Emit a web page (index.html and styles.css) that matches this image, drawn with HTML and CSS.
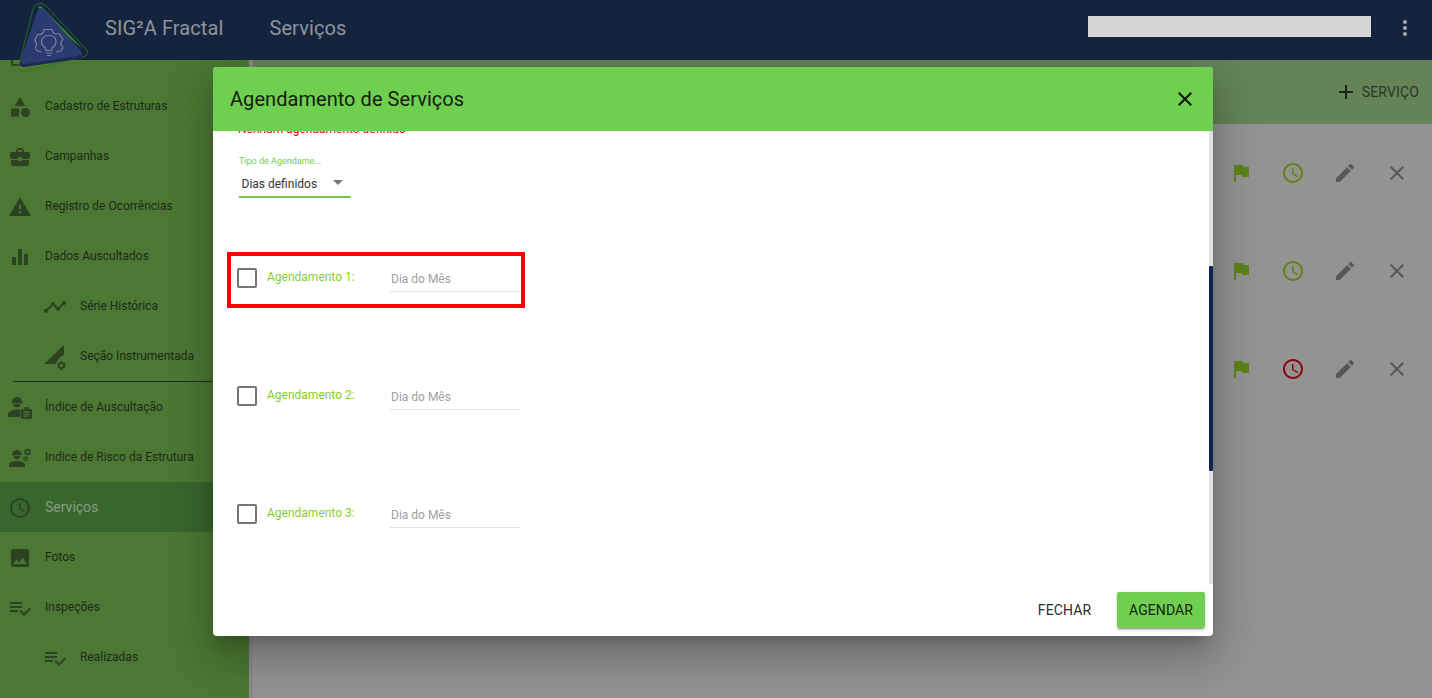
FILE: index.html
```html
<!DOCTYPE html>
<html lang="pt-BR">
<head>
<meta charset="utf-8">
<title>SIG²A Fractal - Serviços</title>
<link rel="stylesheet" href="styles.css">
</head>
<body>
<div class="app">
  <header class="topbar">
    <svg class="logo" viewBox="0 0 96 76" aria-hidden="true">
      <path class="logo-ring" d="M38 4 Q42 2 46 6 L86 49 Q90 55 83 57 L26 71 Q18 73 19 65 L33 9 Q34 5 38 4Z"/>
      <path class="logo-green" d="M38 7 Q41 5 44 9 L84 50 L60 30Z"/>
      <path class="logo-shadow" d="M41 11 L83 55 Q83 58 78 59 L24 67 Q19 67 20 62Z"/>
      <path class="logo-body" d="M38 10 Q41 6 45 10 L80 50 Q85 55 78 56 L26 64 Q19 65 21 59 L37 12Z"/>
      <path class="logo-line" d="M41 52 Q33 50 36.500 45 L36 42 Q34 40 36 37.500 L38 34.500 L41 34.500 L43.500 32.500 L44 29.500 L52 29.500 L53 32.500 L55.500 34 L59 33.500 L63 39.500 L61 42 L61 45 L63 47.500 L61 51 L56 52"/>
      <path class="logo-line" d="M45.500 48 Q41 45 41.500 41 Q42.500 35.500 49 35.500 Q55.500 35.500 56 41 Q56.500 45 52 48 L52 50.500 L46 50.500Z"/>
      <path class="logo-line" d="M46 53 H52 M47 55.500 H51"/>
    </svg>
    <span class="brand">SIG²A Fractal</span>
    <span class="page-title">Serviços</span>
    <div class="search-bar"></div>
    <svg class="icon more" viewBox="0 0 24 24"><use href="#i-more"/></svg>
  </header>

  <div class="workspace">
    <nav class="sidebar">
      <div class="nav-row nav-hidden"><svg class="icon" viewBox="0 0 24 24"><rect x="4" y="4" width="16" height="16" rx="1" class="outline"/></svg></div>
      <div class="nav-row"><svg class="icon" viewBox="0 0 24 24"><path d="M12 2l-5.500 9h11z"/><circle cx="17.500" cy="17.500" r="4.500"/><path d="M3 13.500h8v8H3z"/></svg><span>Cadastro de Estruturas</span></div>
      <div class="nav-row"><svg class="icon" viewBox="0 0 24 24"><path d="M10 16v-1H3.010L3 19c0 1.110.890 2 2 2h14c1.110 0 2-.890 2-2v-4h-7v1h-4zm10-9h-4.010V5l-2-2h-4l-2 2v2H4c-1.100 0-2 .900-2 2v3c0 1.110.890 2 2 2h6v-2h4v2h6c1.100 0 2-.900 2-2V9c0-1.100-.900-2-2-2zm-6 0h-4V5h4v2z"/></svg><span>Campanhas</span></div>
      <div class="nav-row"><svg class="icon" viewBox="0 0 24 24"><path d="M1 21h22L12 2 1 21zm12-3h-2v-2h2v2zm0-4h-2v-4h2v4z"/></svg><span>Registro de Ocorrências</span></div>
      <div class="nav-row"><svg class="icon" viewBox="0 0 24 24"><path d="M10 20h4V4h-4v16zm-6 0h4v-8H4v8zM16 9v11h4V9h-4z"/></svg><span>Dados Auscultados</span></div>
      <div class="nav-row nav-sub"><svg class="icon" viewBox="0 0 24 24"><path d="M23 8c0 1.100-.900 2-2 2-.180 0-.350-.020-.510-.070l-3.560 3.550c.050.160.070.340.070.520 0 1.100-.900 2-2 2s-2-.900-2-2c0-.180.020-.360.070-.520l-2.550-2.550c-.160.050-.340.070-.520.070s-.360-.020-.520-.070l-4.550 4.560c.050.160.070.330.070.510 0 1.100-.900 2-2 2s-2-.900-2-2 .900-2 2-2c.180 0 .350.020.510.070l4.560-4.550C8.020 9.360 8 9.180 8 9c0-1.100.900-2 2-2s2 .900 2 2c0 .180-.020.360-.070.520l2.550 2.550c.160-.050.340-.070.520-.070s.360.020.520.070l3.550-3.560C19.020 8.350 19 8.180 19 8c0-1.100.900-2 2-2s2 .900 2 2z"/></svg><span>Série Histórica</span></div>
      <div class="nav-row nav-sub"><svg class="icon" viewBox="0 0 24 24"><path d="M1 19 L21 0 V10 Q15 12 13 19Z"/><use href="#i-gear" width="11" height="11" x="13" y="15"/></svg><span>Seção Instrumentada</span></div>
      <div class="nav-divider"></div>
      <div class="nav-row"><svg class="icon" viewBox="0 0 24 24"><path d="M9 1c-3 0-5 2.200-5 4.800H3.700v1.400h10.600V5.800H14C14 3.200 12 1 9 1zM5.300 8h7.400c-.200 2.300-1.700 3.600-3.700 3.600S5.500 10.300 5.300 8zM9 13.500c-3.600 0-9 1.500-9 4.500v3h12.500v-7.200c-1.200-.200-2.400-.300-3.500-.300z"/><path fill-rule="evenodd" d="M14.500 13h2v-2h4v2h2c.800 0 1.500.700 1.500 1.500v7c0 .800-.700 1.500-1.500 1.500h-8c-.800 0-1.500-.700-1.500-1.500v-7c0-.800.700-1.500 1.500-1.500zm1 2.500v1.200h6v-1.200zm0 2.500v1.200h6V18zm0 2.300v1h4v-1z"/></svg><span>Índice de Auscultação</span></div>
      <div class="nav-row"><svg class="icon" viewBox="0 0 24 24"><path d="M9 4c-2.800 0-4.500 1.900-4.500 4H4v1.300h10V8h-.500C13.500 5.900 11.800 4 9 4zM5.700 10h6.600c-.200 2-1.600 3.400-3.300 3.400S5.900 12 5.700 10zM9 15c-3.800 0-8 1.500-8 4v2h16v-2c0-2.500-4.200-4-8-4z"/><use href="#i-gear" width="9" height="9" x="15" y="1.500"/><use href="#i-gear" width="6.500" height="6.500" x="14.300" y="9.500"/></svg><span>Indice de Risco da Estrutura</span></div>
      <div class="nav-row nav-active"><svg class="icon" viewBox="0 0 24 24"><use href="#i-clock"/></svg><span>Serviços</span></div>
      <div class="nav-row"><svg class="icon" viewBox="0 0 24 24"><path d="M21 19V5c0-1.100-.900-2-2-2H5c-1.100 0-2 .900-2 2v14c0 1.100.900 2 2 2h14c1.100 0 2-.900 2-2zM8.500 13.500l2.500 3.010L14.500 12l4.500 6H5l3.500-4.500z"/></svg><span>Fotos</span></div>
      <div class="nav-row"><svg class="icon" viewBox="0 0 24 24"><use href="#i-check-list"/></svg><span>Inspeções</span></div>
      <div class="nav-row nav-sub"><svg class="icon" viewBox="0 0 24 24"><use href="#i-check-list"/></svg><span>Realizadas</span></div>
    </nav>

    <main class="main">
      <div class="toolbar">
        <button class="add-btn" type="button"><svg class="icon" viewBox="0 0 24 24"><path d="M19 13h-6v6h-2v-6H5v-2h6V5h2v6h6v2z"/></svg><span>SERVIÇO</span></button>
      </div>
      <div class="service-list">
        <div class="service-row">
          <svg class="icon tone-green" viewBox="0 0 24 24"><use href="#i-flag"/></svg>
          <svg class="icon tone-green" viewBox="0 0 24 24"><use href="#i-clock"/></svg>
          <svg class="icon tone-gray" viewBox="0 0 24 24"><use href="#i-edit"/></svg>
          <svg class="icon tone-gray" viewBox="0 0 24 24"><use href="#i-close"/></svg>
        </div>
        <div class="service-row">
          <svg class="icon tone-green" viewBox="0 0 24 24"><use href="#i-flag"/></svg>
          <svg class="icon tone-green" viewBox="0 0 24 24"><use href="#i-clock"/></svg>
          <svg class="icon tone-gray" viewBox="0 0 24 24"><use href="#i-edit"/></svg>
          <svg class="icon tone-gray" viewBox="0 0 24 24"><use href="#i-close"/></svg>
        </div>
        <div class="service-row">
          <svg class="icon tone-green" viewBox="0 0 24 24"><use href="#i-flag"/></svg>
          <svg class="icon tone-red" viewBox="0 0 24 24"><use href="#i-clock"/></svg>
          <svg class="icon tone-gray" viewBox="0 0 24 24"><use href="#i-edit"/></svg>
          <svg class="icon tone-gray" viewBox="0 0 24 24"><use href="#i-close"/></svg>
        </div>
      </div>
    </main>
  </div>

  <section class="dialog" role="dialog" aria-label="Agendamento de Serviços">
    <header class="dialog-head">
      <h2 class="dialog-title">Agendamento de Serviços</h2>
      <svg class="icon dialog-close" viewBox="0 0 24 24"><use href="#i-close"/></svg>
    </header>
    <div class="dialog-scroll">
      <div class="dialog-body">
        <p class="error-msg">Nenhum agendamento definido</p>
        <div class="select-field">
          <div class="select-label">Tipo de Agendame...</div>
          <div class="select-value"><span>Dias definidos</span><i class="select-arrow"></i></div>
        </div>
        <div class="schedule-list">
          <div class="schedule-row">
            <div class="checkbox"></div>
            <div class="schedule-label">Agendamento 1:</div>
            <div class="day-input">Dia do Mês</div>
            <div class="highlight-box"></div>
          </div>
          <div class="schedule-row">
            <div class="checkbox"></div>
            <div class="schedule-label">Agendamento 2:</div>
            <div class="day-input">Dia do Mês</div>
          </div>
          <div class="schedule-row">
            <div class="checkbox"></div>
            <div class="schedule-label">Agendamento 3:</div>
            <div class="day-input">Dia do Mês</div>
          </div>
        </div>
      </div>
      <div class="scroll-track"><div class="scroll-thumb"></div></div>
    </div>
    <footer class="dialog-actions">
      <button class="btn-text" type="button">FECHAR</button>
      <button class="btn-primary" type="button">AGENDAR</button>
    </footer>
  </section>
</div>

<svg class="sprite" aria-hidden="true">
  <symbol id="i-more" viewBox="0 0 24 24"><path d="M12 8c1.100 0 2-.900 2-2s-.900-2-2-2-2 .900-2 2 .900 2 2 2zm0 2c-1.100 0-2 .900-2 2s.900 2 2 2 2-.900 2-2-.900-2-2-2zm0 6c-1.100 0-2 .900-2 2s.900 2 2 2 2-.900 2-2-.900-2-2-2z"/></symbol>
  <symbol id="i-clock" viewBox="0 0 24 24"><path d="M11.990 2C6.470 2 2 6.480 2 12s4.470 10 9.990 10C17.520 22 22 17.520 22 12S17.520 2 11.990 2zM12 20c-4.420 0-8-3.580-8-8s3.580-8 8-8 8 3.580 8 8-3.580 8-8 8z"/><path d="M12.500 7H11v6l5.250 3.150.750-1.230-4.500-2.670z"/></symbol>
  <symbol id="i-flag" viewBox="0 0 24 24"><path d="M14.400 6L14 4H5v17h2v-7h5.600l.400 2h7V6z"/></symbol>
  <symbol id="i-edit" viewBox="0 0 24 24"><path d="M3 17.250V21h3.750L17.810 9.940l-3.750-3.750L3 17.250zM20.710 7.040c.390-.390.390-1.020 0-1.410l-2.340-2.340c-.390-.390-1.020-.390-1.410 0l-1.830 1.830 3.750 3.750 1.830-1.830z"/></symbol>
  <symbol id="i-close" viewBox="0 0 24 24"><path d="M19 6.410L17.590 5 12 10.590 6.410 5 5 6.410 10.590 12 5 17.590 6.410 19 12 13.410 17.590 19 19 17.590 13.410 12z"/></symbol>
  <symbol id="i-check-list" viewBox="0 0 24 24"><path d="M14 10H2v2h12v-2zm0-4H2v2h12V6zM2 16h8v-2H2v2zm19.500-4.500L23 13l-6.990 7-4.510-4.500L13 14l3.010 3 5.490-5.500z"/></symbol>
  <symbol id="i-gear" viewBox="0 0 24 24"><path fill-rule="evenodd" d="M19.140 12.940c.040-.300.060-.610.060-.940 0-.320-.020-.640-.070-.940l2.030-1.580c.180-.140.230-.410.120-.610l-1.920-3.320c-.120-.220-.370-.290-.590-.220l-2.390.960c-.500-.380-1.030-.700-1.620-.940l-.360-2.540c-.040-.240-.240-.410-.480-.410h-3.840c-.240 0-.430.170-.470.410l-.360 2.540c-.590.240-1.130.570-1.620.940l-2.390-.960c-.220-.080-.470 0-.590.220L2.740 8.870c-.120.210-.080.470.120.610l2.030 1.580c-.050.300-.070.620-.070.940s.020.640.07.940l-2.030 1.580c-.180.140-.230.410-.12.610l1.920 3.320c.120.220.37.290.59.220l2.390-.960c.500.380 1.030.700 1.620.940l.360 2.540c.050.240.240.410.48.410h3.840c.240 0 .440-.170.470-.410l.360-2.540c.590-.240 1.130-.560 1.620-.940l2.390.960c.220.080.470 0 .590-.220l1.920-3.320c.120-.220.070-.470-.12-.61l-2.010-1.580zM12 15.600c-1.980 0-3.600-1.620-3.600-3.600s1.620-3.600 3.600-3.600 3.600 1.620 3.600 3.600-1.620 3.600-3.600 3.600z"/></symbol>
</svg>
</body>
</html>
```

FILE: styles.css
```css
* { box-sizing: border-box; }

html, body {
  margin: 0;
  height: 100%;
  overflow: hidden;
  font-family: Roboto, "Liberation Sans", sans-serif;
}

.sprite { display: none; }

.app {
  position: relative;
  display: flex;
  flex-direction: column;
  height: 698px;
  overflow: hidden;
  background: #939393;
}

.icon {
  display: block;
  flex: none;
  width: 24px;
  height: 24px;
  fill: currentColor;
  overflow: visible;
}

/* Top bar */
.topbar {
  position: relative;
  z-index: 3;
  flex: none;
  display: flex;
  align-items: center;
  height: 60px;
  padding: 0 15px 4px 105px;
  background: #15243e;
  color: #8f949c;
  font-size: 20px;
  line-height: 24px;
  letter-spacing: .1px;
}

.logo {
  position: absolute;
  left: 0;
  top: 0;
  width: 96px;
  height: 76px;
}

.logo-ring { fill: none; stroke: #2f7a22; stroke-width: .8; }
.logo-green { fill: #3d8c22; }
.logo-shadow { fill: #1b2a50; }
.logo-body { fill: #2b3a70; }
.logo-line { fill: none; stroke: #7d849b; stroke-width: 1.200; stroke-linejoin: round; }

.brand { margin-right: 46px; }

.search-bar {
  width: 283px;
  height: 21px;
  margin: 0 22px 3px auto;
  background: #d6d6d6;
}

.more { color: #a6a8ad; }

/* Layout under the top bar */
.workspace {
  flex: 1;
  display: flex;
  min-height: 0;
}

/* Side navigation */
.sidebar {
  flex: none;
  width: 249px;
  overflow: hidden;
  background: #4c7834;
  color: #1e2a18;
  font-size: 12px;
}

.nav-row {
  display: flex;
  align-items: center;
  gap: 13px;
  height: 50px;
  padding-left: 8px;
  color: #1e2a18;
}

.nav-row .icon { color: #2c4322; margin-top: 2px; }

.outline { fill: none; stroke: currentColor; stroke-width: 2; }

.nav-hidden { margin-top: -29px; }
.nav-sub { padding-left: 43px; }

.nav-active {
  background: #38672d;
  color: #8b9c84;
  font-size: 14px;
}

.nav-divider {
  height: 1px;
  margin-left: 13px;
  background: #1a3322;
}

/* Page behind the dialog */
.main {
  flex: 1;
  display: flex;
  flex-direction: column;
  border-left: 4px solid #8b8b8b;
}

.toolbar {
  flex: none;
  display: flex;
  justify-content: flex-end;
  align-items: center;
  height: 64px;
  padding-right: 13px;
  background: #648457;
}

.add-btn {
  display: flex;
  align-items: center;
  gap: 4px;
  padding: 0;
  border: 0;
  background: none;
  font: inherit;
  font-size: 14px;
  letter-spacing: .15px;
  color: #2a3628;
}

.add-btn .icon { color: #1a2418; }

.service-list { flex: 1; }

.service-row {
  display: flex;
  justify-content: flex-end;
  align-items: center;
  gap: 28px;
  height: 98px;
  padding-right: 23px;
}

.tone-green { color: #5e8419; }
.tone-red { color: #870a0a; }
.tone-gray { color: #575757; }

/* Dialog */
.dialog {
  position: absolute;
  z-index: 2;
  left: 213px;
  top: 67px;
  display: flex;
  flex-direction: column;
  width: 1000px;
  height: 569px;
  overflow: hidden;
  border-radius: 4px;
  background: #fff;
  box-shadow: 0 11px 15px -7px rgba(0,0,0,.2), 0 24px 38px 3px rgba(0,0,0,.14), 0 9px 46px 8px rgba(0,0,0,.12);
}

.dialog-head {
  flex: none;
  display: flex;
  justify-content: space-between;
  align-items: center;
  height: 64px;
  padding: 0 16px 0 17px;
  background: #6fcf4f;
  color: #14210f;
  position: relative;
  z-index: 1;
}

.dialog-title {
  margin: 0;
  font-size: 20px;
  font-weight: 400;
  line-height: 24px;
  letter-spacing: .05px;
  color: #14210f;
}

.dialog-close { color: #111; }

.dialog-scroll {
  flex: 1;
  display: flex;
  min-height: 0;
}

.dialog-body {
  flex: 1;
  min-width: 0;
  position: relative;
}

.error-msg {
  margin: -9px 0 0 25px;
  font-size: 12px;
  line-height: 14px;
  letter-spacing: -.02px;
  color: #f00;
}

.select-field {
  width: 112px;
  margin: 20px 0 0 26px;
}

.select-label {
  font-size: 9px;
  line-height: 10px;
  color: #71cf4f;
  white-space: nowrap;
}

.select-value {
  display: flex;
  justify-content: space-between;
  align-items: center;
  height: 32px;
  padding: 5px 8px 0 2.500px;
  border-bottom: 2px solid #6fc94c;
  font-size: 12px;
  color: #333;
}

.select-arrow {
  width: 0;
  height: 0;
  margin-bottom: 3px;
  border-left: 5px solid transparent;
  border-right: 5px solid transparent;
  border-top: 5px solid #757575;
}

.schedule-list {
  display: grid;
  row-gap: 86px;
  margin-top: 62px;
}

.schedule-row {
  position: relative;
  display: flex;
  align-items: flex-start;
  height: 32px;
  padding-left: 24px;
}

.checkbox {
  flex: none;
  width: 20px;
  height: 20px;
  margin-top: 8px;
  border: 2px solid #757575;
  border-radius: 2px;
}

.schedule-label {
  flex: none;
  width: 123px;
  margin: 10px 0 0 10px;
  font-size: 12px;
  line-height: 14px;
  color: #86ce2e;
}

.day-input {
  flex: none;
  width: 130px;
  height: 32px;
  padding: 12px 0 0 1px;
  border-bottom: 1px solid #e0e0e0;
  font-size: 12px;
  line-height: 14px;
  color: #a0a0a0;
}

.highlight-box {
  position: absolute;
  left: 14px;
  top: -8px;
  width: 298px;
  height: 56px;
  border: 4px solid #f00;
  pointer-events: none;
}

.scroll-track {
  flex: none;
  width: 4px;
  background: #e0e0e0;
}

.scroll-thumb {
  width: 4px;
  height: 205px;
  margin-top: 135px;
  border-radius: 1px;
  background: #0e2552;
}

.dialog-actions {
  flex: none;
  display: flex;
  justify-content: flex-end;
  align-items: center;
  gap: 10px;
  height: 52px;
  padding: 0 8px;
}

.btn-text,
.btn-primary {
  height: 36px;
  border: 0;
  border-radius: 2px;
  font: inherit;
  font-size: 14px;
  letter-spacing: .1px;
}

.btn-text {
  width: 85px;
  background: none;
  color: #2e2e2e;
}

.btn-primary {
  width: 88px;
  background: #6fcf4f;
  color: #14210f;
  box-shadow: 0 3px 1px -2px rgba(0,0,0,.2), 0 2px 2px 0 rgba(0,0,0,.14), 0 1px 5px 0 rgba(0,0,0,.12);
}
```
